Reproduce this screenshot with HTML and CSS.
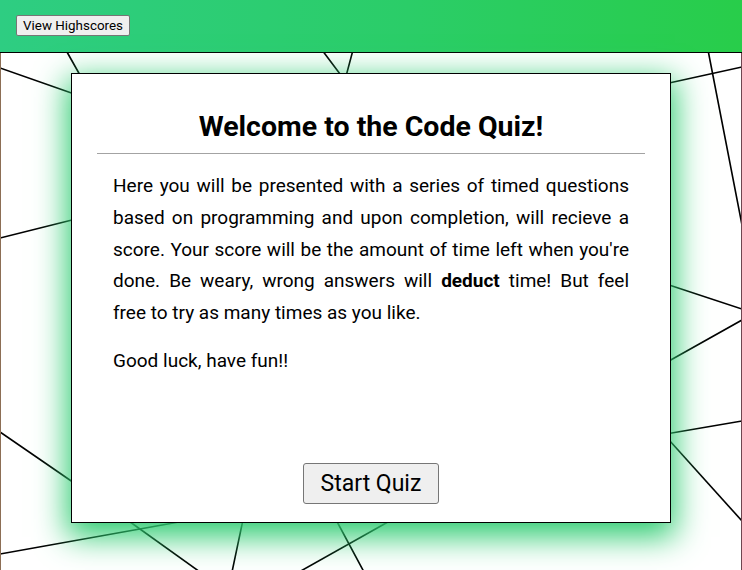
FILE: index.html
```html
<!DOCTYPE html>
<html lang="en">
<head>
<meta charset="utf-8">
<title>Code Quiz</title>
<link rel="stylesheet" href="styles.css">
</head>
<body>
<header class="topbar">
  <button class="btn-scores" type="button">View Highscores</button>
</header>
<main class="stage">
  <section class="card">
    <h1 class="card-title">Welcome to the Code Quiz!</h1>
    <hr class="divider">
    <div class="card-body">
      <p class="intro">Here you will be presented with a series of timed questions based on programming and upon completion, will recieve a score. Your score will be the amount of time left when you're done. Be weary, wrong answers will <strong>deduct</strong> time! But feel free&nbsp;to try as many times as you like.</p>
      <p class="intro">Good luck, have fun!!</p>
    </div>
    <div class="card-actions">
      <button class="btn-start" type="button">Start Quiz</button>
    </div>
  </section>
</main>
</body>
</html>
```

FILE: styles.css
```css
html, body {
  margin: 0;
  padding: 0;
}

body {
  min-height: 570px;
  overflow: hidden;
  font-family: Roboto, "Liberation Sans", Arial, sans-serif;
  color: #000;
  background-color: #fff;
  background-repeat: no-repeat;
  background-position: 0 0;
  background-size: 742px 570px;
  background-image: url("data:image/svg+xml,%3Csvg xmlns='http://www.w3.org/2000/svg' width='742' height='570' viewBox='0 0 742 570'%3E%3Cg stroke='black' stroke-width='1.6' fill='none' stroke-linecap='round'%3E%3Cline x1='67' y1='52' x2='85' y2='84'/%3E%3Cline x1='0' y1='68' x2='80' y2='96'/%3E%3Cline x1='0' y1='238' x2='80' y2='218'/%3E%3Cline x1='0' y1='432' x2='80' y2='487'/%3E%3Cline x1='0' y1='554' x2='190' y2='520'/%3E%3Cline x1='126' y1='519' x2='200' y2='572'/%3E%3Cline x1='244' y1='515' x2='232' y2='572'/%3E%3Cline x1='334' y1='516' x2='364' y2='572'/%3E%3Cline x1='395' y1='518' x2='299' y2='572'/%3E%3Cline x1='322' y1='50' x2='352' y2='90'/%3E%3Cline x1='353' y1='50' x2='345' y2='80'/%3E%3Cline x1='708' y1='50' x2='742' y2='225'/%3E%3Cline x1='660' y1='85' x2='742' y2='67'/%3E%3Cline x1='660' y1='282' x2='742' y2='309'/%3E%3Cline x1='742' y1='320' x2='660' y2='366'/%3E%3Cline x1='660' y1='435' x2='742' y2='421'/%3E%3Cline x1='660' y1='430' x2='742' y2='521'/%3E%3C/g%3E%3Cline x1='0.5' y1='52' x2='0.5' y2='570' stroke='rgb(140,110,85)' stroke-width='1'/%3E%3Cline x1='741.5' y1='52' x2='741.5' y2='570' stroke='rgb(110,70,80)' stroke-width='1'/%3E%3C/svg%3E");
}

.topbar {
  box-sizing: border-box;
  height: 53px;
  padding: 15px 16px 0;
  border-bottom: 1px solid #000;
  background: linear-gradient(90deg, #2ecd82 0%, #2bcd68 55%, #28cd4a 100%);
}

.btn-scores {
  box-sizing: border-box;
  height: 21px;
  padding: 1px 6px;
  font-family: Roboto, "Liberation Sans", Arial, sans-serif;
  font-size: 13.4px;
  color: #000;
  background: #efefef;
  border: 1px solid #767676;
  border-radius: 2px;
}

.stage {
  display: flex;
  justify-content: center;
  padding-top: 20px;
}

.card {
  box-sizing: border-box;
  width: 600px;
  height: 450px;
  padding: 0 25px 18px;
  display: flex;
  flex-direction: column;
  background: #fff;
  border: 1px solid #000;
  box-shadow: 0 10px 30px 4px #2ecc71;
}

.card-title {
  margin: 35px 0 8px;
  font-size: 28.5px;
  line-height: 36px;
  font-weight: 700;
  text-align: center;
}

.divider {
  margin: 0;
  height: 0;
  border: 0;
  border-top: 1px solid #a3a3a3;
}

.card-body {
  padding: 0 16px;
}

.intro {
  margin: 16px 0 0;
  font-size: 19px;
  line-height: 31.75px;
  text-align: justify;
}

.intro strong {
  font-weight: 700;
}

.card-actions {
  margin-top: auto;
  display: flex;
  justify-content: center;
}

.btn-start {
  box-sizing: border-box;
  height: 41px;
  padding: 0 17px;
  font-family: Roboto, "Liberation Sans", Arial, sans-serif;
  font-size: 23px;
  color: #000;
  background: #efefef;
  border: 1px solid #767676;
  border-radius: 3px;
}
```
